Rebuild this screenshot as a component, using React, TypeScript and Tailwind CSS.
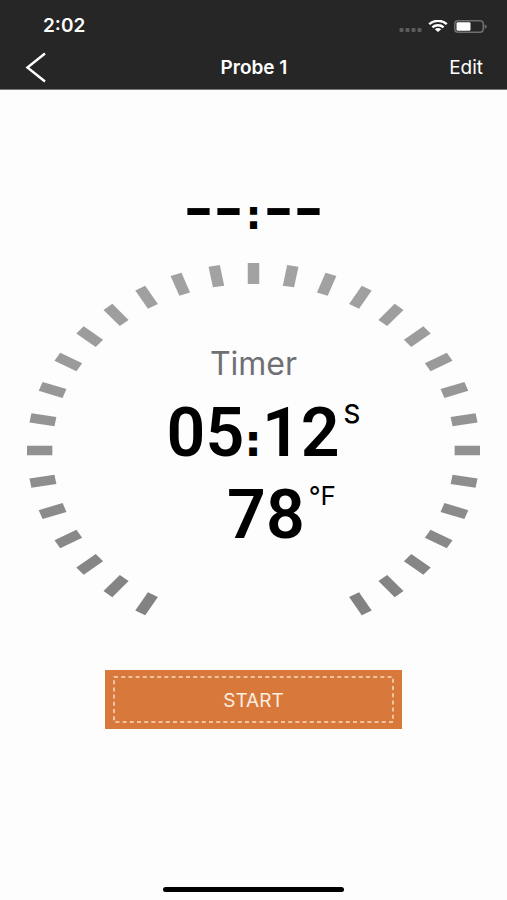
const TICK_ANGLES = Array.from({ length: 31 }, (_, i) => -150 + i * 10);

// ticks get darker towards the bottom of the dial
const tickColor = (angle: number) => {
  const level = Math.round(145 + 17 * Math.cos((angle * Math.PI) / 180));
  return `rgb(${level},${level},${level})`;
};

function StatusBar() {
  return (
    <div className="flex h-[46px] items-end justify-between pb-2 pl-[43px] pr-5">
      <span className="text-[19px] leading-6 font-semibold">2:02</span>
      <div className="flex h-6 items-center gap-[6px]">
        <svg className="mt-2 h-1 w-6" viewBox="0 0 24 4" fill="#5c5c5c" aria-hidden="true">
          <rect x="1.5" width="4" height="4" rx="1" />
          <rect x="7.5" width="4" height="4" rx="1" />
          <rect x="13.5" width="4" height="4" rx="1" />
          <rect x="19.5" width="4" height="4" rx="1" />
        </svg>
        <svg className="h-3 w-5" viewBox="0 0 20 12" preserveAspectRatio="none" aria-hidden="true">
          <g fill="none" stroke="#fff" strokeWidth="2.4">
            <path d="M1.2 4.2C6-0.2 14-0.2 18.8 4.2" />
            <path d="M4.4 7.4C7.4 4.6 12.6 4.6 15.6 7.4" />
          </g>
          <path d="M6.8 9.2C8.6 7.7 11.4 7.7 13.2 9.2L10 12Z" fill="#fff" />
        </svg>
        <svg className="h-[13px] w-[33px]" viewBox="0 0 33 13" aria-hidden="true">
          <rect x="0.75" y="0.75" width="28.5" height="11.5" rx="3.2" fill="none" stroke="#6e6e6e" strokeWidth="1.5" />
          <rect x="2.5" y="2.2" width="14" height="8.6" rx="1.4" fill="#fff" />
          <path d="M30.6 4.2C33.4 5 33.4 8 30.6 8.8Z" fill="#6e6e6e" />
        </svg>
      </div>
    </div>
  );
}

function NavBar() {
  return (
    <nav className="grid h-[43px] grid-cols-3 items-center pl-[25px] pr-6">
      <button type="button" aria-label="Back" className="justify-self-start">
        <svg className="h-[31px] w-[22px]" viewBox="0 0 22 31" fill="none" stroke="#fff" strokeWidth="2.4" aria-hidden="true">
          <path d="M20 1.5L2.4 15.5L20 29.5" />
        </svg>
      </button>
      <h1 className="text-center text-[19px] leading-7 font-semibold">Probe 1</h1>
      <button type="button" className="justify-self-end text-[19px] leading-7">Edit</button>
    </nav>
  );
}

function Dial() {
  return (
    <section className="mt-[38px] grid px-[27px]">
      <svg className="h-[350px] w-full overflow-visible [grid-area:1/1]" viewBox="-187.5 -187.5 375 350" preserveAspectRatio="none" aria-hidden="true">
        {TICK_ANGLES.map((angle) => (
          <rect key={angle} x="-4.75" y="-187.5" width="9.5" height="21" fill={tickColor(angle)} transform={`rotate(${angle})`} />
        ))}
      </svg>
      <div className="flex flex-col items-center pt-[81px] [grid-area:1/1]">
        <h2 className="text-[32px] leading-10 text-[#707074]">Timer</h2>
        <div className="mt-2 flex pl-5 font-['Roboto'] text-black">
          <span className="text-[68px] leading-[82px] font-semibold">
            05<span className="font-['DejaVu_Sans'] text-[44px] leading-none font-bold">:</span>12
          </span>
          <span className="pt-[6px] pl-1 font-['Inter'] text-[26px] leading-8 font-medium">S</span>
        </div>
        <div className="flex pl-14 font-['Roboto'] text-black">
          <span className="text-[68px] leading-[82px] font-semibold">78</span>
          <span className="pt-[6px] pl-1 font-['Inter'] text-[26px] leading-8">°F</span>
        </div>
      </div>
    </section>
  );
}

export default function App() {
  return (
    <div className="flex min-h-screen flex-col bg-[#fdfdfd] font-['Inter',sans-serif]">
      <header className="border-b border-[#777] bg-[#262626] text-white">
        <StatusBar />
        <NavBar />
      </header>

      <main className="flex flex-1 flex-col">
        {/* Target time, not set yet */}
        <div className="mt-[95px] flex h-10 items-center justify-center gap-1 font-['Open_Sans'] text-[52px] leading-10 font-extrabold text-black">
          <span>–</span>
          <span>–</span>
          <span className="pt-5 font-['DejaVu_Sans'] text-[40px]">:</span>
          <span>–</span>
          <span>–</span>
        </div>

        <Dial />

        <button type="button" className="relative mx-auto mt-[57px] h-[59px] w-[297px] bg-[#d9783b] pt-0.5 text-[19px] leading-7 text-[#fdeee0]">
          <svg className="absolute inset-x-2 inset-y-[6px] h-[47px] w-[281px]" fill="none" aria-hidden="true">
            <rect x="1" y="1" width="279" height="45" stroke="#f8dcc4" strokeWidth="1.5" strokeDasharray="4 3.2" />
          </svg>
          START
        </button>
      </main>

      <footer className="flex justify-center pb-2">
        <div className="h-[5px] w-[181px] rounded-full bg-black" />
      </footer>
    </div>
  );
}
